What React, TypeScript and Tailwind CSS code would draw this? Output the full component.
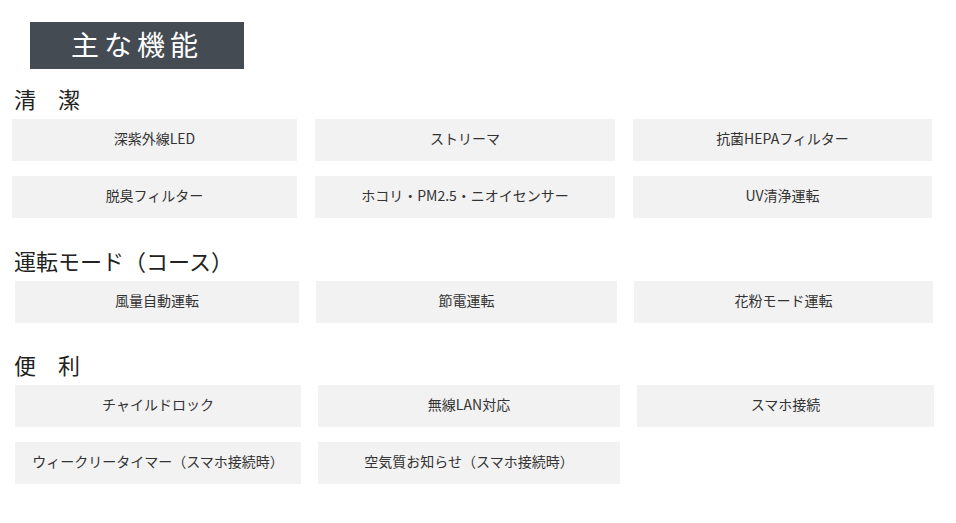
const font = { fontFamily: '"Noto Sans CJK JP", "Noto Sans", sans-serif' };

type Section = {
  title: string;
  items: string[];
  grid: string;
  mt: string;
};

const sections: Section[] = [
  {
    title: '清　潔',
    items: [
      '深紫外線LED',
      'ストリーマ',
      '抗菌HEPAフィルター',
      '脱臭フィルター',
      'ホコリ・PM2.5・ニオイセンサー',
      'UV清浄運転',
    ],
    grid: 'ml-[12px] grid-cols-[285px_300px_299px] gap-x-[18px]',
    mt: 'mt-[16px]',
  },
  {
    title: '運転モード（コース）',
    items: ['風量自動運転', '節電運転', '花粉モード運転'],
    grid: 'ml-[15px] grid-cols-[284px_301px_299px] gap-x-[17px]',
    mt: 'mt-[29px]',
  },
  {
    title: '便　利',
    items: [
      'チャイルドロック',
      '無線LAN対応',
      'スマホ接続',
      'ウィークリータイマー（スマホ接続時）',
      '空気質お知らせ（スマホ接続時）',
    ],
    grid: 'ml-[15px] grid-cols-[286px_302px_297px] gap-x-[17px]',
    mt: 'mt-[28px]',
  },
];

function FeatureSection({ section }: { section: Section }) {
  return (
    <section className={section.mt}>
      <h3 className="ml-[14px] h-[30px] text-[22px] leading-[26px] font-normal text-[#222]">
        {section.title}
      </h3>
      <div className={`mt-[4px] grid gap-y-[15px] ${section.grid}`}>
        {section.items.map((item) => (
          <div
            key={item}
            className="flex h-[42px] items-center justify-center bg-[#f2f2f2] pb-[3px] text-[14px] text-[#333]"
          >
            {item}
          </div>
        ))}
      </div>
    </section>
  );
}

export default function App() {
  return (
    <div className="min-h-[523px] w-[956px] bg-white pt-[22px]" style={font}>
      <div className="ml-[30px] flex h-[47px] w-[214px] items-center justify-center bg-[#444b53] pb-[4px]">
        <h2 className="text-[28px] font-normal tracking-[5px] text-white">主な機能</h2>
      </div>
      {sections.map((s) => (
        <FeatureSection key={s.title} section={s} />
      ))}
    </div>
  );
}
